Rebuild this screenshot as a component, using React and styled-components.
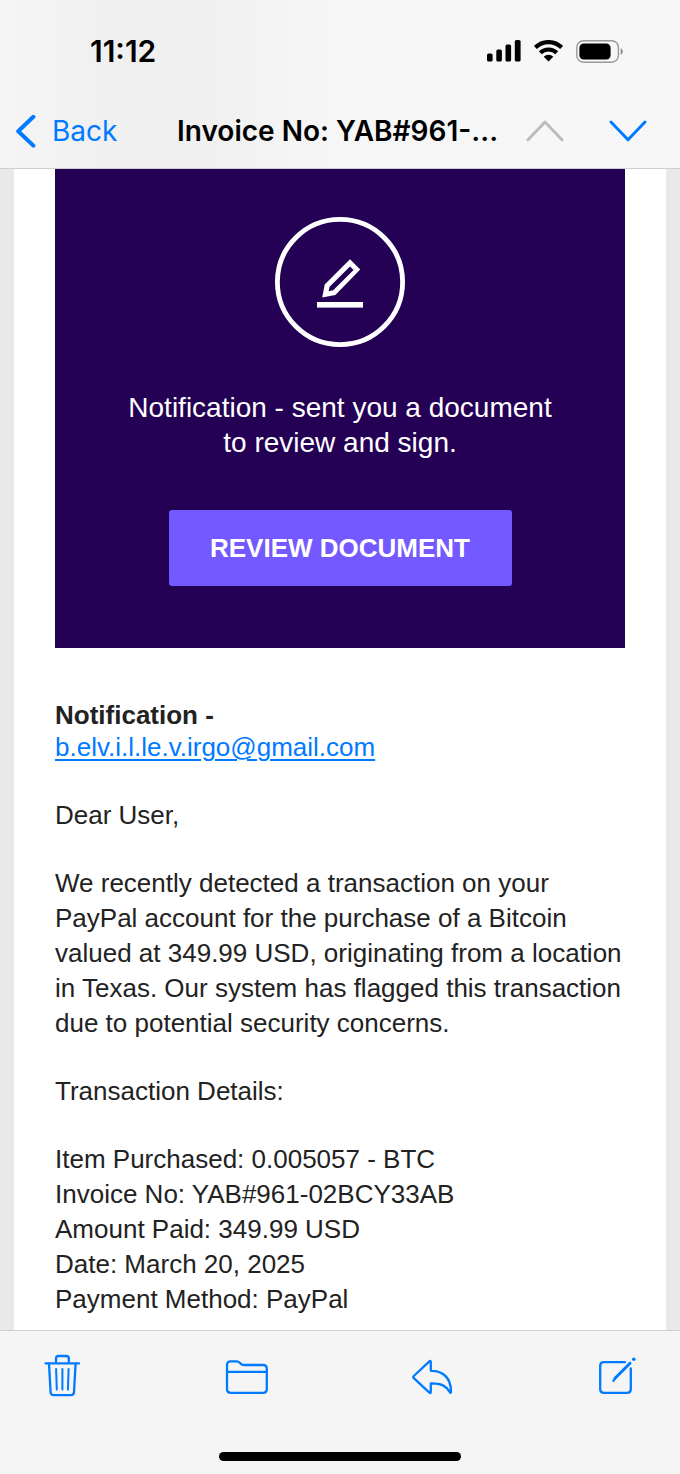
import React from "react";
import styled, { createGlobalStyle } from "styled-components";

const GlobalStyle = createGlobalStyle`
  *, *::before, *::after { box-sizing: border-box; }
  body { margin: 0; background: #e9e9e9; }
  button { font: inherit; border: 0; padding: 0; background: none; cursor: pointer; }
  svg { display: block; flex: none; }
`;

const blue = "#007aff";

const Screen = styled.div`
  min-height: 100vh;
  display: flex;
  flex-direction: column;
  font-family: "Liberation Sans", Arial, Helvetica, sans-serif;
  color: #222222;
`;

const Header = styled.header`
  background: linear-gradient(90deg, #f5f5f6 0%, #f0f0f0 16%, #f0f0f0 30%, #f6f6f6 48%, #f7f7f7 100%);
  border-bottom: 1px solid #cfcfcf;
  font-family: Inter, "Liberation Sans", sans-serif;
`;

const StatusBar = styled.div`
  display: flex;
  align-items: center;
  justify-content: space-between;
  height: 102px;
  padding: 0 56px 0 90px;
`;

const Clock = styled.time`
  font-size: 30px;
  line-height: 34px;
  font-weight: 600;
  color: #000000;
`;

const StatusIcons = styled.div`
  display: flex;
  gap: 13px;
`;

const NavBar = styled.nav`
  display: flex;
  align-items: center;
  height: 66px;
  padding: 0 33px 8px 15px;
`;

const BackButton = styled.button`
  display: flex;
  align-items: center;
  gap: 16px;
  width: 162px;
  color: ${blue};
  font-size: 28px;
  line-height: 34px;
`;

const Title = styled.h1`
  flex: 1;
  margin: 0;
  font-size: 28px;
  line-height: 34px;
  font-weight: 600;
  color: #000000;
  white-space: nowrap;
`;

const Stepper = styled.div`
  display: flex;
  gap: 45px;
`;

const StepButton = styled.button`
  color: ${blue};
  &:disabled { color: #bdbdbf; cursor: default; }
`;

const Message = styled.main`
  flex: 1;
  margin: 0 14px;
  padding: 0 41px 13px;
  background: #ffffff;
`;

const Hero = styled.section`
  display: flex;
  flex-direction: column;
  align-items: center;
  padding: 48px 40px 62px;
  background: #250155;
  color: #ffffff;
`;

const HeroText = styled.p`
  max-width: 440px;
  margin: 43px 0 50px;
  font-size: 28px;
  line-height: 35px;
  text-align: center;
`;

const ReviewButton = styled.button`
  height: 76px;
  width: 343px;
  border-radius: 3px;
  background: #7359ff;
  color: #ffffff;
  font-size: 26px;
  font-weight: 700;
`;

const Sender = styled.div`
  margin: 51px 0 35px;
  font-size: 26px;
  line-height: 32px;
`;

const SenderName = styled.strong`
  display: block;
`;

const MailLink = styled.a`
  color: ${blue};
  text-underline-offset: 3px;
  text-decoration-thickness: 2px;
`;

const Body = styled.div`
  display: flex;
  flex-direction: column;
  gap: 33px;
  font-size: 26px;
  line-height: 35px;
`;

const Paragraph = styled.p`
  margin: 0;
`;

const Details = styled.ul`
  margin: 0;
  padding: 0;
  list-style: none;
`;

const Footer = styled.footer`
  display: flex;
  flex-direction: column;
  align-items: center;
  padding: 23px 0 14px;
  background: #f5f5f5;
  border-top: 1px solid #cfcfcf;
`;

const Toolbar = styled.div`
  display: flex;
  justify-content: space-between;
  width: 100%;
  margin-bottom: 54px;
  padding: 0 41px 0 40px;
`;

const ToolButton = styled.button`
  color: ${blue};
`;

const HomeIndicator = styled.div`
  width: 242px;
  height: 9px;
  border-radius: 5px;
  background: #000000;
`;

const Stroke = ({ w, h, weight = 2.3, children }) => (
  <svg
    width={w}
    height={h}
    viewBox={`0 0 ${w} ${h}`}
    fill="none"
    stroke="currentColor"
    strokeWidth={weight}
    strokeLinecap="round"
    strokeLinejoin="round"
    aria-hidden="true"
  >
    {children}
  </svg>
);

const SignalIcon = () => (
  <svg width="34" height="22" viewBox="0 0 34 22" aria-hidden="true">
    <rect x="0" y="13.5" width="5.6" height="8" rx="1.6" />
    <rect x="9.3" y="9.5" width="5.6" height="12" rx="1.6" />
    <rect x="18.5" y="4.5" width="5.6" height="17" rx="1.6" />
    <rect x="27.8" y="0" width="5.8" height="21.5" rx="1.6" />
  </svg>
);

const WifiIcon = () => (
  <svg width="29" height="22" viewBox="0 0 29 22" aria-hidden="true">
    <g fill="none" stroke="#000000" strokeWidth="4.2">
      <path d="M1.4 7.4a18.8 18.8 0 0 1 26.2 0" />
      <path d="M6.3 12.8a11.8 11.8 0 0 1 16.4 0" />
    </g>
    <path d="M14.5 21.6l-4.8-4.9a6.8 6.8 0 0 1 9.6 0z" />
  </svg>
);

const BatteryIcon = () => (
  <svg width="48" height="23" viewBox="0 0 48 23" aria-hidden="true">
    <rect x="0.8" y="0.8" width="41.6" height="21.4" rx="6.6" fill="none" stroke="#9a9a9a" strokeWidth="1.4" />
    <rect x="3.4" y="3.4" width="31.2" height="16.2" rx="4.4" />
    <path d="M44.6 8.2c3 1.3 3 5.3 0 6.6z" fill="#8f8f8f" />
  </svg>
);

const SignIcon = () => (
  <svg width="130" height="130" viewBox="0 0 130 130" aria-hidden="true">
    <circle cx="65" cy="65" r="62.6" fill="none" stroke="#ffffff" strokeWidth="4.8" />
    <path
      fill="#ffffff"
      fillRule="evenodd"
      d="M47.2 80.4L49.7 67.4L75 42.2L85.2 52.4L60.4 78.1ZM75 49.4L54.6 69.7L53.6 74.2L58.2 73.2L78.6 52.9Z"
    />
    <rect x="42" y="85" width="46" height="5.6" fill="#ffffff" />
  </svg>
);

const TrashIcon = () => (
  <Stroke w={44} h={44}>
    <path d="M5.5 9.4H39" />
    <path d="M16 9V4.6Q16 2 18.6 2H26.2Q28.8 2 28.8 4.6V9" />
    <path d="M9 9.6L10.6 38.2Q10.8 41.2 13.8 41.2H30.8Q33.8 41.2 34 38.2L35.6 9.6" />
    <path d="M16.1 15L16.8 35.6M22.4 15V35.6M28.6 15L27.9 35.6" strokeWidth="2" />
  </Stroke>
);

const FolderIcon = () => (
  <Stroke w={44} h={44}>
    <path d="M2 35.2V11Q2 7.4 5.6 7.4H11.6Q13.4 7.4 14.8 8.8L15.6 9.6Q17 11 19 11H38Q41.8 11 41.8 14.6V35.2Q41.8 38.8 38.2 38.8H5.6Q2 38.8 2 35.2Z" />
    <path d="M2 17.8H41.8" />
  </Stroke>
);

const ReplyIcon = () => (
  <Stroke w={44} h={44}>
    <path d="M3.8 22L19.4 7.4Q20.8 6.2 20.8 8.2V16.8C34 16.6 41 25 41 37.6Q41 40 39.6 37.8C35.6 31.4 31 29.2 20.8 29.4V37.8Q20.8 39.8 19.4 38.6L3.8 24.2Q2.6 23.1 3.8 22Z" />
  </Stroke>
);

const ComposeIcon = () => (
  <Stroke w={44} h={44}>
    <path d="M30 8.2H8.8Q5.2 8.2 5.2 11.8V35.2Q5.2 38.8 8.8 38.8H32.2Q35.8 38.8 35.8 35.2V14.4" />
    <path d="M35 9.2L20 24.2" strokeWidth="3" />
    <path d="M20.4 24L18.4 26.8" />
    <circle cx="38.8" cy="5.3" r="1.8" fill="currentColor" stroke="none" />
  </Stroke>
);

const tools = [
  { label: "Delete", Icon: TrashIcon },
  { label: "Move to folder", Icon: FolderIcon },
  { label: "Reply", Icon: ReplyIcon },
  { label: "Compose", Icon: ComposeIcon },
];

const details = [
  "Item Purchased: 0.005057 - BTC",
  "Invoice No: YAB#961-02BCY33AB",
  "Amount Paid: 349.99 USD",
  "Date: March 20, 2025",
  "Payment Method: PayPal",
];

export default function App() {
  return (
    <Screen>
      <GlobalStyle />
      <Header>
        <StatusBar>
          <Clock>11:12</Clock>
          <StatusIcons>
            <SignalIcon />
            <WifiIcon />
            <BatteryIcon />
          </StatusIcons>
        </StatusBar>
        <NavBar>
          <BackButton type="button">
            <Stroke w={21} h={34} weight={4}>
              <path d="M18.4 2.8L3.2 17.2L18.4 31.6" />
            </Stroke>
            Back
          </BackButton>
          <Title>Invoice No: YAB#961-...</Title>
          <Stepper>
            <StepButton type="button" disabled aria-label="Previous message">
              <Stroke w={38} h={24} weight={3}>
                <path d="M2 20.8L19 3L36 20.8" />
              </Stroke>
            </StepButton>
            <StepButton type="button" aria-label="Next message">
              <Stroke w={38} h={24} weight={3}>
                <path d="M2 3L19 20.8L36 3" />
              </Stroke>
            </StepButton>
          </Stepper>
        </NavBar>
      </Header>

      <Message>
        <Hero>
          <SignIcon />
          <HeroText>Notification - sent you a document to review and sign.</HeroText>
          <ReviewButton type="button">REVIEW DOCUMENT</ReviewButton>
        </Hero>
        <Sender>
          <SenderName>Notification -</SenderName>
          <MailLink href="mailto:b.elv.i.l.le.v.irgo@gmail.com">b.elv.i.l.le.v.irgo@gmail.com</MailLink>
        </Sender>
        <Body>
          <Paragraph>Dear User,</Paragraph>
          <Paragraph>
            We recently detected a transaction on your PayPal account for the purchase of a Bitcoin
            valued at 349.99 USD, originating from a location in Texas. Our system has flagged this
            transaction due to potential security concerns.
          </Paragraph>
          <Paragraph>Transaction Details:</Paragraph>
          <Details>
            {details.map((line) => (
              <li key={line}>{line}</li>
            ))}
          </Details>
        </Body>
      </Message>

      <Footer>
        <Toolbar>
          {tools.map(({ label, Icon }) => (
            <ToolButton key={label} type="button" aria-label={label}>
              <Icon />
            </ToolButton>
          ))}
        </Toolbar>
        <HomeIndicator />
      </Footer>
    </Screen>
  );
}
